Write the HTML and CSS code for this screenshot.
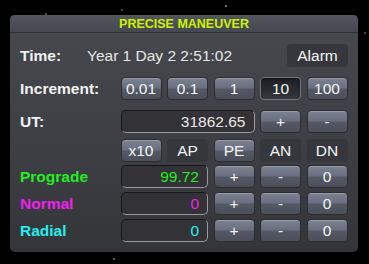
FILE: index.html
```html
<!DOCTYPE html>
<html>
<head>
<link rel="stylesheet" href="styles.css">
</head>
<body>
<div id="Window">
  <div id="TitleBar">PRECISE MANEUVER</div>
  <div id="Content">
    <div class="row timerow">
      <div class="label">Time:</div>
      <div class="timevalue">Year 1 Day 2 2:51:02</div>
      <div class="chip alarm">Alarm</div>
    </div>

    <div class="row grid gapinc">
      <div class="label">Increment:</div>
      <div class="button">0.01</div>
      <div class="button">0.1</div>
      <div class="button">1</div>
      <div class="button pressed">10</div>
      <div class="button">100</div>
    </div>

    <div class="row grid gapinc">
      <div class="label">UT:</div>
      <div class="field span3">31862.65</div>
      <div class="button">+</div>
      <div class="button">-</div>
    </div>

    <div class="row grid gapx10">
      <div class="label"></div>
      <div class="button">x10</div>
      <div class="chip">AP</div>
      <div class="button">PE</div>
      <div class="chip">AN</div>
      <div class="chip">DN</div>
    </div>

    <div class="row grid gapdv">
      <div class="label prograde">Prograde</div>
      <div class="field span2 prograde">99.72</div>
      <div class="button">+</div>
      <div class="button">-</div>
      <div class="button">0</div>
    </div>

    <div class="row grid gapdv2">
      <div class="label normal">Normal</div>
      <div class="field span2 normal">0</div>
      <div class="button">+</div>
      <div class="button">-</div>
      <div class="button">0</div>
    </div>

    <div class="row grid gapdv2">
      <div class="label radial">Radial</div>
      <div class="field span2 radial">0</div>
      <div class="button">+</div>
      <div class="button">-</div>
      <div class="button">0</div>
    </div>
  </div>
</div>
</body>
</html>
```

FILE: styles.css
```css
html, body
{
  margin: 0;
  padding: 0;
  width: 100%;
  height: 100%;
  font-family: "Liberation Sans", Arial, sans-serif;
}

body
{
  /* a few faint stars behind the window */
  background-color: #000;
  background-image:
    radial-gradient(circle at 46px 14px, #555 0.8px, transparent 1.2px),
    radial-gradient(circle at 226px 6px, #6a6a6a 0.8px, transparent 1.2px),
    radial-gradient(circle at 122px 10px, #444 0.8px, transparent 1.2px),
    radial-gradient(circle at 365px 33px, #6b3a2a 0.8px, transparent 1.2px),
    radial-gradient(circle at 114px 259px, #555 0.8px, transparent 1.2px);
  overflow: hidden;
}

#Window
{
  margin: 15px 0 0 10px;
  width: 348px;
  height: 237px;
  border-radius: 5px;
  background: linear-gradient(#47494f, #3c3e43 60%, #333539);
  overflow: hidden;
}

#TitleBar
{
  height: 18px;
  line-height: 18px;
  text-align: center;
  font-size: 12.5px;
  font-weight: bold;
  color: #ccf200;
  background: linear-gradient(#53565e, #45484f);
  border-bottom: 1px solid #2e3034;
  box-sizing: border-box;
}

#Content
{
  padding: 11px 10px 0 10px;
}

.row
{
  height: 23px;
  display: flex;
  align-items: center;
}

.grid
{
  display: grid;
  grid-template-columns: 95px repeat(5, 41px);
  column-gap: 5.5px;
  align-items: stretch;
}

.gapinc
{
  margin-top: 10px;
}

.gapx10
{
  margin-top: 6px;
}

.gapdv
{
  margin-top: 3px;
}

.gapdv2
{
  margin-top: 4px;
}

.label
{
  font-size: 15.5px;
  font-weight: bold;
  color: #f2f2f2;
  display: flex;
  align-items: center;
}

.timerow .label
{
  width: 67px;
}

.timevalue
{
  flex: 1;
  font-size: 15.5px;
  color: #e6e6e6;
}

.alarm
{
  width: 61px;
  height: 23px;
}

.button, .chip, .field
{
  box-sizing: border-box;
  font-size: 15.5px;
  color: #f4f4f4;
  display: flex;
  align-items: center;
  justify-content: center;
  border-radius: 4px;
}

.button
{
  background: linear-gradient(#7b8292, #6a7080 45%, #535864 55%, #4b4f5a);
  border: 1px solid #2b2d32;
  box-shadow: inset 0 1px 0 rgba(255, 255, 255, 0.22);
}

.pressed
{
  background: linear-gradient(#1c1e22, #2a2d33 60%, #34373e);
  border: 1px solid #72767e;
  box-shadow: inset 0 1px 2px rgba(0, 0, 0, 0.6);
}

.chip
{
  background-color: #35373c;
}

.field
{
  justify-content: flex-end;
  padding-right: 8px;
  background-color: #333236;
  border: 1px solid #17171a;
  border-right-color: #9a9a9e;
  border-bottom-color: #9a9a9e;
  border-radius: 5px;
  color: #e8e8e8;
}

.span3
{
  grid-column: span 3;
}

.span2
{
  grid-column: span 2;
}

.prograde
{
  color: #22ee22;
}

.normal
{
  color: #ee22ee;
}

.radial
{
  color: #22eeee;
}
```
